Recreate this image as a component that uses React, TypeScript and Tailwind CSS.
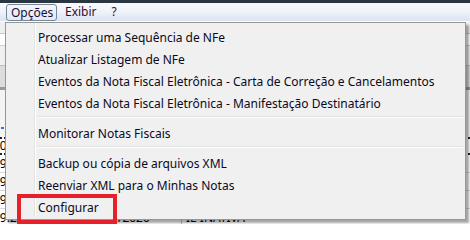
import React from "react";

type Entry = { label: string } | { sep: true };

const entries: Entry[] = [
  { label: "Processar uma Sequência de NFe" },
  { label: "Atualizar Listagem de NFe" },
  { label: "Eventos da Nota Fiscal Eletrônica - Carta de Correção e Cancelamentos" },
  { label: "Eventos da Nota Fiscal Eletrônica - Manifestação Destinatário" },
  { sep: true },
  { label: "Monitorar Notas Fiscais" },
  { sep: true },
  { label: "Backup ou cópia de arquivos XML" },
  { label: "Reenviar XML para o Minhas Notas" },
  { label: "Configurar" },
];

export default function App() {
  return (
    <div
      className="relative w-[470px] h-[224px] overflow-hidden bg-white text-[12px] leading-none text-[#10101a]"
      style={{ fontFamily: '"Noto Sans", "Open Sans", sans-serif' }}
    >
      {/* title strip */}
      <div className="h-[3px] bg-[#2b3643]" />
      {/* menubar */}
      <div className="flex h-[19px] items-stretch border-b border-white bg-gradient-to-b from-[#f8fafd] via-[#eef2fa] to-[#dbe3f1] pl-[6px]">
        <div className="mt-[1px] flex h-[17px] w-[51px] items-center rounded-[3px] border border-[#76879c] bg-gradient-to-b from-[#f4f6fa] to-[#e3e9f3] pl-[4px] text-[#1a1030]">
          Opções
        </div>
        <div className="flex items-center pl-[8px] text-[#3a0a2a]">Exibir</div>
        <div className="flex items-center pl-[15px] text-[#3a0a2a]">?</div>
      </div>

      {/* background grid content */}
      <div className="flex flex-col bg-[#f3f3f3]">
        <div className="h-[12px] border-b border-[#c8c8c8] bg-[#efefef]" />
        <div className="h-[12px] border-b border-[#cfcfcf] bg-white" />
        <div className="h-[20px] border-b border-[#bdbdbd] bg-[#f0f0f0]" />
        <div className="h-[24px] border-b-[3px] border-[#9a9a9a] bg-[#dcdcdc]" />
        <div className="h-[47px] bg-[#f4f4f4] pl-[1px] pt-[37px]">
          <div className="h-[2px] w-[3px] bg-[#2a7ad8]" />
        </div>
        <div className="flex h-[18px] items-center border-y-2 border-dotted border-[#202020] bg-white text-[#000]">
          <span className="ml-[-7px]">10</span>
        </div>
        {["19", "19", "19"].map((t, i) => (
          <div key={i} className="flex h-[18px] items-center border-b border-[#d8d8d8] bg-white text-[#000]">
            <span className="ml-[-7px]">{t}</span>
          </div>
        ))}
        <div className="flex h-[18px] items-center bg-white text-[#000]">
          <span className="ml-[-7px] w-[36px]">19.2002</span>
          <span className="w-[52px] border-l border-[#c0c0c0] pl-[4px]">55</span>
          <span className="w-[100px] border-l border-[#c0c0c0] pl-[4px]">20/01/2020</span>
          <span className="border-l border-[#c0c0c0] pl-[4px]">IE INATIVA</span>
        </div>
      </div>

      {/* dropdown menu */}
      <div className="absolute left-[5px] top-[22px] w-[461px] border border-[#979797] bg-[#f0f0f0] py-[2px] shadow-[3px_3px_2px_rgba(0,0,0,0.35)]">
        <div className="relative flex flex-col">
          <div className="absolute bottom-0 left-[28px] top-[-2px] w-[2px] border-l border-[#e2e3e3] bg-white" />
          {entries.map((e, i) =>
            "sep" in e ? (
              <div key={i} className="flex h-[8px] items-center pl-[31px] pr-[2px]">
                <div className="h-[2px] w-full border-t border-[#e0e0e0] bg-white" />
              </div>
            ) : (
              <div key={i} className="flex h-[22px] items-center pl-[32px] pt-[4px] text-[#0a0a1e]">
                {e.label}
              </div>
            )
          )}
        </div>
      </div>

      {/* highlight box */}
      <div className="absolute left-[17px] top-[194px] h-[30px] w-[100px] border-4 border-[#e6202b]" />
    </div>
  );
}
